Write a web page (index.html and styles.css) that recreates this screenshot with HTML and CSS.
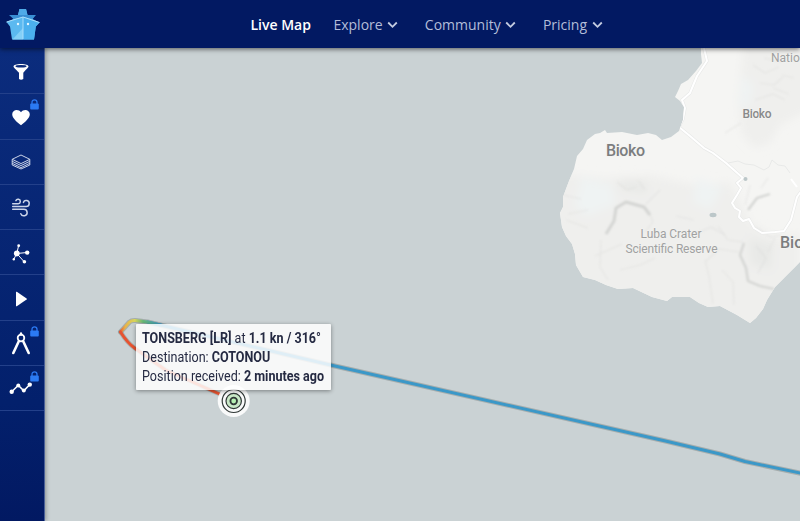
FILE: index.html
```html
<!DOCTYPE html>
<html lang="en">
<head>
<meta charset="utf-8">
<title>Live Map</title>
<link rel="stylesheet" href="styles.css">
</head>
<body>
<header class="topbar">
  <svg class="logo" width="34" height="32" viewBox="0 0 34 32">
    <path d="M13.500 1h6.500l1.500 6H29l-2.500 4L33.500 14.500l-3.700 4-1.800 13H6L4 18.500.500 14l7-3L5 7h7z" fill="#5bb9f0"/>
    <path d="M13.500 1h6.500l1.500 6H12z" fill="#4faae8"/>
    <path d="M3 7h27l-3.500 4L17 9l-9.500 2z" fill="#398fd4"/>
    <path d="M17 9 33.500 14.500l-3.700 4-1.800 13H17z" fill="#4bb0ee"/>
    <path d="M6.500 31.500 17 20v11.500z" fill="#83cff7"/>
    <path d="M.5 14 17 9l16.500 5.500M17 9v22" fill="none" stroke="#a8dcfa" stroke-width="1"/>
    <circle cx="12" cy="16" r="1.200" fill="#e5f6ff"/><circle cx="22" cy="16" r="1.200" fill="#e5f6ff"/>
  </svg>
  <nav class="nav">
    <a class="link active">Live Map</a>
    <a class="link">Explore<svg class="chev" width="11" height="8" viewBox="0 0 11 8"><path d="M1.200 1.500l4.300 4.300 4.300-4.300"/></svg></a>
    <a class="link">Community<svg class="chev" width="11" height="8" viewBox="0 0 11 8"><path d="M1.200 1.500l4.300 4.300 4.300-4.300"/></svg></a>
    <a class="link">Pricing<svg class="chev" width="11" height="8" viewBox="0 0 11 8"><path d="M1.200 1.500l4.300 4.300 4.300-4.300"/></svg></a>
  </nav>
</header>
<div class="content">
  <aside class="side">
    <div class="tool"><svg width="24" height="24" viewBox="0 0 24 24"><path d="M4.500 6.500c0-1.500 3-2.500 7.500-2.500s7.500 1 7.500 2.500c0 1-3 3.300-5.200 6.200V19q-2.300 1.300-4.300 0v-6.300C7.500 9.800 4.500 7.500 4.500 6.500z" fill="#fff"/><ellipse cx="12" cy="6.300" rx="5.600" ry="1.200" fill="#0a2a7a"/></svg></div>
    <div class="tool"><svg width="24" height="24" viewBox="0 0 24 24"><path d="M12 20.300C8 17 3.200 13.300 3.200 9.300c0-4.800 6.300-6 8.800-2 2.500-4 8.800-2.800 8.800 2 0 4-4.800 7.700-8.800 11z" fill="#fff"/></svg><svg class="lock" width="9" height="11" viewBox="0 0 9 11"><path d="M2 5V3.300a2.500 2.500 0 0 1 5 0V5" fill="none" stroke="#2b7af3" stroke-width="1.300"/><rect x=".2" y="4.600" width="8.600" height="6" rx="1" fill="#2b7af3"/></svg></div>
    <div class="tool"><svg width="24" height="24" viewBox="0 0 24 24" fill="none" stroke="#c9d2e8" stroke-width="1" stroke-linejoin="round"><path d="M12 4l8.800 4.300L12 12.600 3.200 8.300zM3.200 10.300l8.800 4.300 8.800-4.300M3.200 12.300l8.800 4.300 8.800-4.300M3.200 8.300v5.700l8.800 4 8.800-4V8.300"/></svg></div>
    <div class="tool"><svg width="24" height="24" viewBox="0 0 24 24" fill="none" stroke="#cbd5ea" stroke-width="1.500" stroke-linecap="round"><path d="M3.700 7.800h5.500a2.300 2.300 0 1 0-2.300-3.200M3.700 10.500h13.600a3 3 0 1 0-2.900-4.100M3.700 13.200h11.100a3.300 3.300 0 1 1-3 4.600"/></svg></div>
    <div class="tool"><svg width="24" height="24" viewBox="0 0 24 24" fill="#fff"><path d="M7.800 12.500l1.800-7.800M7.800 12.500l10.300-1M7.800 12.500l7.600 8.500M7.800 12.500l-3 5.700" fill="none" stroke="#fff" stroke-width="1"/><circle cx="7.800" cy="12.500" r="2.900"/><circle cx="9.700" cy="4.700" r="1.400"/><circle cx="18.200" cy="11.600" r="2.200"/><circle cx="15.400" cy="20.700" r="1.800"/><circle cx="4.800" cy="18.200" r="1.200"/></svg></div>
    <div class="tool"><svg width="24" height="24" viewBox="0 0 24 24"><path d="M7 5.200v13.600q0 .8.800.4l9.800-6.600q.7-.6 0-1.200L7.800 4.800Q7 4.400 7 5.200z" fill="#fff"/></svg></div>
    <div class="tool"><svg width="24" height="26" viewBox="0 0 24 26" fill="none" stroke="#fff" stroke-linecap="round"><circle cx="12" cy="7" r="3.300" stroke-width="1.800"/><path d="M12 2.300v1.500" stroke-width="2.200"/><path d="M9.800 10.200 4.300 22M14.200 10.200 19.700 22" stroke-width="2.600"/></svg><svg class="lock" width="9" height="11" viewBox="0 0 9 11"><path d="M2 5V3.300a2.500 2.500 0 0 1 5 0V5" fill="none" stroke="#2b7af3" stroke-width="1.300"/><rect x=".2" y="4.600" width="8.600" height="6" rx="1" fill="#2b7af3"/></svg></div>
    <div class="tool"><svg width="24" height="24" viewBox="0 0 24 24" fill="#fff"><path d="M2.700 14.800 9.300 8.300l5.500 5.500 6-6.300" fill="none" stroke="#fff" stroke-width="1.600"/><circle cx="2.700" cy="14.800" r="2.200"/><circle cx="9.300" cy="8.500" r="2"/><circle cx="14.800" cy="13.600" r="2"/><circle cx="20.800" cy="7.600" r="2.200"/></svg><svg class="lock" width="9" height="11" viewBox="0 0 9 11"><path d="M2 5V3.300a2.500 2.500 0 0 1 5 0V5" fill="none" stroke="#2b7af3" stroke-width="1.300"/><rect x=".2" y="4.600" width="8.600" height="6" rx="1" fill="#2b7af3"/></svg></div>
  </aside>
  <main class="map">
    <svg class="canvas" width="755" height="473" viewBox="45 48 755 473">
      <defs>
        <clipPath id="land"><path d="M701 40V54L702 63 696 71 688 80 681 84 678 91 675 97 680 101 684 107 683 120 679 131 671 137 662 140 656 135 648 133 637 135 622 132 607 133 605 130 600 133 595 134 587 140 583 149 577 156 574 169 569 181 563 197 563 207 560 213 562 227 566 236 572 244 575 254 576 265 583 277 595 280 606 285 618 289 633 288 652 297 667 301 672 297 690 297 699 303 708 307 720 306 737 315 750 323 756 318 763 309 767 300 775 287 785 277 793 269 800 262V40z"/></clipPath>
        <filter id="soft" x="-20%" y="-20%" width="140%" height="140%"><feGaussianBlur stdDeviation="4"/></filter>
        <filter id="relief" x="-10%" y="-10%" width="120%" height="120%"><feGaussianBlur stdDeviation=".8"/></filter>
        <linearGradient id="track" gradientUnits="userSpaceOnUse" x1="120" y1="0" x2="162" y2="0"><stop offset="0" stop-color="#e65a32"/><stop offset=".12" stop-color="#e7b24b"/><stop offset=".35" stop-color="#d8d45b"/><stop offset=".55" stop-color="#67b878"/><stop offset="1" stop-color="#3b98c8"/></linearGradient>
      </defs>
      <g clip-path="url(#land)">
        <path fill="#f5f5f3" d="M540 40h260v300H540z"/>
        <g filter="url(#soft)">
          <path d="M550 172l55 6 45-3 45 10 35-3 10 20 10 20 25 15 25-4v110H550z" fill="#efefed"/>
          <path d="M744 40h66v70l-30 15-10 18-15 5-13-13-4-35z" fill="#efefed"/>
          <path d="M582 177l30 8 4 20-30 12-12-12zM697 178l26 10-12 22-19-8zM742 75l12 10-5 24-10-4z" fill="#eff3f3"/>
          <path d="M620 180l25 2 3 12-27-4zM748 238l25 6-2 26-20-5z" fill="#e8e9e7"/>
        </g>
        <g fill="none" stroke="#d4d5d3" filter="url(#relief)" stroke-linejoin="round">
          <path d="M606 234l8-13 2-13 10-6 18 5 6 8" stroke-width="3"/>
          <path d="M748 210l9-12 13-4M744 243l-4 12 6 13 2 13 12 5 14 3" stroke-width="2.300"/>
          <path d="M601 240l-1 27 8 13M705 260l4 16 4 28M722 270l11 12 1 23M718 226l10 14 15 2M705 262l14-13 20 3M650 214l3 8-8 10M563 195l18 4M568 214l20-4M566 220l22 8M753 65l12 8 14-6M760 83l14 2 9-8M764 58l17 4M755 100l18-6 12 6M773 88l16 6M782 75l12 3M725 133l16-10M617 182l10 8 9-3M638 180l7 10M660 190l-14 14M595 256l27-12M620 270l20-5 15-7" stroke-width="1.100" opacity=".4"/>
          <path d="M755 227l16 10 10-2M756 246l10 12-8 15M775 238l-7 14M693 235l18-8 14 8M676 216l18 4M750 185l-5 20M768 178l-7 10" stroke-width="1.600" opacity=".3"/>
        </g>
        <g fill="none" stroke-linejoin="round">
          <path d="M704 48l3 13-10 15-7 17-8 7 3 8-2 11-4 8 11 9 14 12 9 5 13 10 17 15-6 5 4 5-4 7-5 8 3 5 5 3-1 6 4 4 6-2 5 9 8 5 13-1 9-1 7-11 6-23 8-11" stroke="#e8e9e8" stroke-width="3.200"/>
          <path d="M704 48l3 13-10 15-7 17-8 7 3 8-2 11-4 8 11 9 14 12 9 5 13 10 17 15-6 5 4 5-4 7-5 8 3 5 5 3-1 6 4 4 6-2 5 9 8 5 13-1 9-1 7-11 6-23 8-11M791 179l6 8" stroke="#fff" stroke-width="2"/>
          <path d="M728 163l10-2 7 3 9 1 10 5 5-3 3-7 6 5 7 1 5 7" stroke="#e8e9e8" stroke-width="1"/>
        </g>
        <ellipse cx="713" cy="215" rx="3.500" ry="2.200" fill="#bcc7c9"/><circle cx="745.500" cy="179" r="2" fill="#bcc7c9"/>
      </g>
      <g fill="none" stroke-linejoin="round" stroke-linecap="round">
        <path d="M120.500 332l9-10q2-1.800 6-1.500l12 1.500 183 43 335 76 54.500 13 25 7.500L802 473.500" stroke="#77817f" stroke-opacity=".45" stroke-width="5"/>
        <path d="M120.500 332q7 11 14 16l31 22 54 24" stroke="#77817f" stroke-opacity=".4" stroke-width="4.600"/>
        <path d="M147.500 322l183 43 335 76 54.500 13 25 7.500L802 473.500" stroke="#3b98c8" stroke-width="3"/>
        <path d="M120.500 332l9-10q2-1.800 6-1.500l12 1.500 15 3.500" stroke="url(#track)" stroke-width="3"/>
        <path d="M120.500 332q7 11 14 16l31 22 54 24" stroke="#e65330" stroke-width="3"/>
      </g>
      <circle cx="233.700" cy="401" r="16" fill="#fff" fill-opacity=".88"/>
      <g fill="none" stroke="#303836" stroke-width="1.200"><circle cx="233.700" cy="401" r="11.500"/><circle cx="233.700" cy="401" r="7.700" fill="#c9e9c7"/><circle cx="233.700" cy="401" r="3.300" fill="#b5f0b2" stroke-width="1.800"/></g>
      <g class="places" text-anchor="middle">
        <text class="region" x="625.500" y="156" textLength="39">Bioko</text>
        <text class="district" x="757" y="118" textLength="29">Bioko</text>
        <text class="park" x="671" y="238" textLength="61">Luba Crater</text>
        <text class="park" x="671.500" y="252.500" textLength="92">Scientific Reserve</text>
        <text class="park" x="771" y="62" text-anchor="start">National</text>
        <text class="region" x="780" y="248" text-anchor="start">Bioko</text>
      </g>
    </svg>
    <section class="tip">
      <div class="line"><b>TONSBERG [LR]</b> at <b>1.1 kn / 316°</b></div>
      <div class="line">Destination: <b>COTONOU</b></div>
      <div class="line">Position received: <b>2 minutes ago</b></div>
    </section>
  </main>
</div>
</body>
</html>
```
FILE: styles.css
```css
* { box-sizing: border-box; }
body { margin: 0; width: 800px; height: 521px; overflow: hidden; display: flex; flex-direction: column; background: #cad2d4; font-family: "Open Sans", sans-serif; }
.topbar { height: 48px; flex: none; display: flex; align-items: center; background: #021962; position: relative; z-index: 2; box-shadow: 0 1px 5px rgba(0, 0, 0, .6); }
.logo { margin-left: 6px; flex: none; }
.nav { display: flex; align-items: center; margin: 1px 0 0 210.500px; font-size: 14px; line-height: 20px; }
.link { color: #b3bdd9; display: flex; align-items: center; margin-right: 26.700px; white-space: nowrap; }
.link.active { color: #fff; font-weight: 600; margin-right: 22.500px; }
.chev { margin-left: 4.500px; fill: none; stroke: #c3cbe0; stroke-width: 1.8; }
.content { flex: 1; display: flex; min-height: 0; }
.side { width: 45px; flex: none; padding-top: 1px; background: linear-gradient(#0b2c7d, #03206c 75%, #021962); border-right: 1px solid #4a6098; box-shadow: 1px 0 4px rgba(0, 0, 0, .3); position: relative; z-index: 1; }
.tool { height: 45.3px; display: flex; align-items: center; justify-content: center; border-bottom: 1px solid #23408a; position: relative; }
.tool > svg:first-child { margin: 2px 2px 0 0; }
.tool .lock { position: absolute; right: 5px; top: 5px; }
.map { position: relative; flex: 1; overflow: hidden; }
.canvas { display: block; }
.places { font-family: "Roboto", sans-serif; paint-order: stroke; stroke: #f3f3f1; stroke-width: 1.5px; }
.region { font-size: 16px; font-weight: 500; fill: #7b7d7e; }
.district { font-size: 12px; font-weight: 500; fill: #88898a; }
.park { font-size: 12px; fill: #a0a1a1; stroke-width: 1px; }
.tip { position: absolute; left: 90.500px; top: 276px; width: 195px; height: 66px; padding: 5px 0 0 6.500px; background: rgba(255, 255, 255, .84); border-radius: 1px; box-shadow: 0 1px 4px rgba(0, 0, 0, .4); color: #252a42; font: 14px/19px "Roboto", sans-serif; }
.line { white-space: nowrap; width: max-content; transform-origin: 0 50%; transform: scaleX(.897); }
.line b { font-weight: 700; }
```
